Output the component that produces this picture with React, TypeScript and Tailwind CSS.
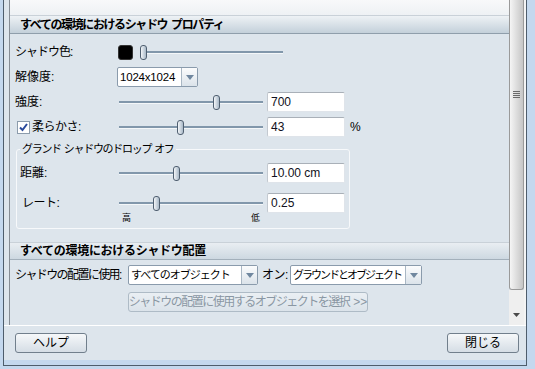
import React from 'react';

function Slider({ className, thumb }: { className: string; thumb: number }) {
  return (
    <div className={`relative h-[15px] ${className}`}>
      <div className="absolute left-0 right-0 top-[6px] h-[3px] border-b border-[#f4f7f9] bg-[#8197ab]" />
      <div
        className="absolute top-0 h-[15px] w-[7px] rounded-[3px] border border-[#4f5f70] bg-linear-to-r from-[#f3f6f9] to-[#a9b9c8]"
        style={{ left: thumb }}
      />
    </div>
  );
}

function TextBox({ value }: { value: string }) {
  return (
    <div className="flex h-[20px] w-[78px] items-center whitespace-nowrap rounded-[2px] border border-[#dfe4ea] border-t-[#a9b0b8] border-l-[#c3c9d0] bg-white pl-[3px] text-[12px] tracking-normal text-[#101020]">
      {value}
    </div>
  );
}

function Arrow() {
  return (
    <svg width="8" height="5" viewBox="0 0 8 5">
      <path d="M0 0H8L4 5Z" fill="#70879f" />
    </svg>
  );
}

function Select({ value, className, textClass }: { value: string; className: string; textClass: string }) {
  return (
    <div className={`flex h-[20px] items-stretch rounded-[2px] border border-[#8a9bac] bg-white ${className}`}>
      <div className={`flex flex-1 items-center overflow-hidden whitespace-nowrap pl-[2px] ${textClass}`}>{value}</div>
      <div className="flex w-[16px] items-center justify-center border-l border-[#a9b7c4] bg-linear-to-b from-[#fbfcfd] to-[#dbe3ea]">
        <Arrow />
      </div>
    </div>
  );
}

function Button({ label }: { label: string }) {
  return (
    <button
      type="button"
      className="flex h-[20px] w-[72px] items-center justify-center rounded-[3px] border border-[#717f8c] bg-linear-to-b from-[#f6f8fa] to-[#d5dde5] text-[12px] text-black"
    >
      {label}
    </button>
  );
}

export default function App() {
  return (
    <div className="flex h-[369px] w-[535px] whitespace-nowrap bg-[#c4d8ee] pb-[3px] pl-[3px] pr-[8px] font-['Liberation_Sans','Noto_Sans_CJK_JP',sans-serif] text-[12px] leading-[14px] text-black">
      <div className="flex flex-1 flex-col border-x border-b border-[#4e5d6c]">
        <div className="flex flex-1 flex-col bg-[#dde5ec]">
          {/* scroll area */}
          <div className="flex h-[326px] border-b border-white pl-[5px]">
            <div className="flex w-[500px] flex-col border-l border-[#858c94]">
              <div className="h-[15px] bg-linear-to-b from-[#f8f9fa] to-[#eef1f4]" />
              <div className="flex h-[19px] items-center border-y border-t-[#c9d1d8] border-b-[#8f9eab] bg-linear-to-b from-[#eef2f5] to-[#c3d0da] pl-[10px] font-bold tracking-[-1.4px]">
                すべての環境におけるシャドウ<span className="ml-[4px]">プロパティ</span>
              </div>

              <div className="flex flex-col pl-[5px]">
                <div className="mt-[8px] flex h-[20px] items-center">
                  <div className="w-[104px] tracking-[-1px]">シャドウ色:</div>
                  <div className="-ml-[1px] h-[15px] w-[15px] rounded-[3px] border border-[#333] bg-black" />
                  <Slider className="ml-[7px] w-[143px]" thumb={0} />
                </div>

                <div className="mt-[5px] flex h-[20px] items-center">
                  <div className="w-[104px]">解像度:</div>
                  <Select value="1024x1024" className="-ml-[2px] w-[81px]" textClass="text-[11.5px] tracking-[-0.2px]" />
                </div>

                <div className="mt-[5px] flex h-[20px] items-center">
                  <div className="w-[104px]">強度:</div>
                  <Slider className="w-[144px]" thumb={94} />
                  <div className="ml-[4px]">
                    <TextBox value="700" />
                  </div>
                </div>

                <div className="mt-[5px] flex h-[20px] items-center">
                  <div className="flex w-[104px] items-center">
                    <div className="ml-[2px] flex h-[13px] w-[13px] items-center justify-center border border-[#8c9cac] bg-white">
                      <svg width="9" height="9" viewBox="0 0 9 9">
                        <path d="M1 4.5L3.5 7L8 1" fill="none" stroke="#2a4a9c" strokeWidth="2" />
                      </svg>
                    </div>
                    <span className="ml-[2px] tracking-[-0.5px]">柔らかさ:</span>
                  </div>
                  <Slider className="w-[144px]" thumb={58} />
                  <div className="ml-[4px]">
                    <TextBox value="43" />
                  </div>
                  <span className="ml-[5px]">%</span>
                </div>

                <fieldset className="ml-[1px] mt-[5px] w-[334px] rounded-[3px] border border-[#f7f9fb] pb-[4px] pl-[3px]">
                  <legend className="px-[2px] text-[11px] leading-[14px] tracking-[-1.3px]">
                    グランド<span className="ml-[3px]">シャドウのドロップ</span>
                    <span className="ml-[3px]">オフ</span>
                  </legend>
                  <div className="mt-[7px] flex h-[20px] items-center">
                    <div className="w-[99px]">距離:</div>
                    <Slider className="w-[144px]" thumb={54} />
                    <div className="ml-[4px]">
                      <TextBox value="10.00 cm" />
                    </div>
                  </div>
                  <div className="mt-[10px] flex h-[20px] items-center">
                    <div className="w-[99px] pl-[2px] tracking-[-0.5px]">レート:</div>
                    <Slider className="w-[144px]" thumb={34} />
                    <div className="ml-[4px]">
                      <TextBox value="0.25" />
                    </div>
                  </div>
                  <div className="flex h-[11px] w-[243px] items-center justify-between pl-[102px] pr-[3px] text-[9px] leading-[11px]">
                    <span>高</span>
                    <span>低</span>
                  </div>
                </fieldset>
              </div>

              <div className="mt-[13px] flex h-[18px] items-center border-y border-t-[#c9d1d8] border-b-[#a3b0bb] bg-linear-to-b from-[#e9eef2] to-[#cdd8e1] pl-[10px] font-bold tracking-[-0.3px]">
                すべての環境におけるシャドウ配置
              </div>

              <div className="flex flex-col pl-[5px]">
                <div className="mt-[5px] flex h-[20px] items-center">
                  <div className="w-[113px] tracking-[-1.6px]">シャドウの配置に使用:</div>
                  <Select value="すべてのオブジェクト" className="w-[130px]" textClass="text-[11px] tracking-[-1px]" />
                  <span className="ml-[4px] w-[28px] tracking-[-0.5px]">オン:</span>
                  <Select value="グラウンドとオブジェクト" className="w-[132px]" textClass="text-[11px] tracking-[-2px]" />
                </div>
                <button
                  type="button"
                  className="ml-[113px] mt-[7px] flex h-[20px] w-[240px] items-center justify-center rounded-[3px] border border-[#aebbc6] bg-linear-to-b from-[#eaeff3] to-[#dbe3ea] text-[12px] tracking-[-1.5px] text-[#8a97a3]"
                >
                  シャドウの配置に使用するオブジェクトを選択
                  <span className="ml-[4px] tracking-normal">&gt;&gt;</span>
                </button>
              </div>
            </div>

            {/* scrollbar */}
            <div className="flex w-[15px] flex-col">
              <div className="flex h-[290px] flex-col items-center rounded-b-[3px] border-x border-b border-[#9a9a9a] bg-linear-to-r from-[#f5f5f5] to-[#c6c6c6] pt-[91px]">
                <div className="h-[1px] w-[7px] bg-[#6b6b6b]" />
                <div className="mt-[1px] h-[1px] w-[7px] bg-[#6b6b6b]" />
                <div className="mt-[1px] h-[1px] w-[7px] bg-[#6b6b6b]" />
                <div className="mt-[1px] h-[1px] w-[7px] bg-[#6b6b6b]" />
              </div>
              <div className="flex flex-1 flex-col items-center bg-[#efefef] pt-[23px]">
                <svg width="7" height="4" viewBox="0 0 7 4">
                  <path d="M0 0H7L3.5 4Z" fill="#4a4a4a" />
                </svg>
              </div>
            </div>
            <div className="w-[2px] bg-[#f4f4f4]" />
          </div>

          {/* footer */}
          <div className="flex flex-1 justify-between pl-[11px] pr-[7px] pt-[7px]">
            <Button label="ヘルプ" />
            <Button label="閉じる" />
          </div>
        </div>
        <div className="h-[5px] bg-[#c4d8ee]" />
      </div>
    </div>
  );
}
